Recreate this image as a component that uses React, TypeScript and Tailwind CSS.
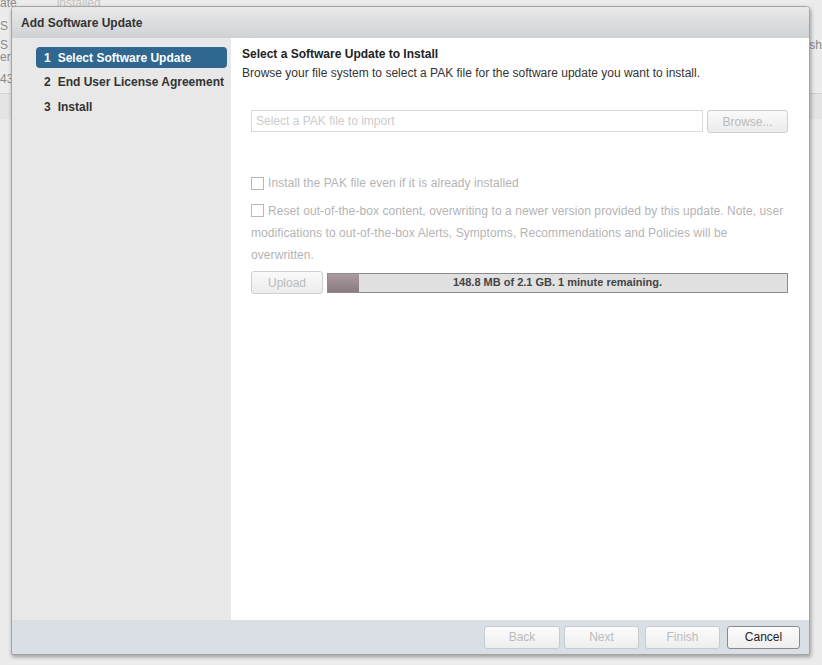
import React from 'react'

const font = { fontFamily: '"Liberation Sans", Arial, sans-serif' }

function Step({ n, label, active }: { n: number; label: string; active?: boolean }) {
  return (
    <div
      className={`flex h-[21px] items-center gap-[7px] rounded-[4px] pl-[8px] text-[12px] font-bold ${
        active ? 'bg-[#2f6791] text-white' : 'text-[#333]'
      }`}
    >
      <span>{n}</span>
      <span>{label}</span>
    </div>
  )
}

function FooterButton({ label, primary, className }: { label: string; primary?: boolean; className?: string }) {
  return (
    <button
      className={`h-[23px] rounded-[3px] border bg-gradient-to-b from-[#fcfcfc] to-[#eeeeee] text-[12px] ${
        primary ? 'border-[#8a8a8a] text-[#222]' : 'border-[#c8ccd0] text-[#bbbbbb]'
      } ${className ?? ''}`}
    >
      {label}
    </button>
  )
}

export default function App() {
  return (
    <div className="relative h-[665px] w-[822px] overflow-hidden bg-[#ececec]" style={font}>
      {/* page behind the dialog */}
      <div className="text-[12px] text-[#8a8a8a]">
        <div className="-mt-[3px] flex gap-[40px] leading-[12px]">
          <span>ate</span>
          <span className="text-[#c4c4c4]">installed</span>
        </div>
        <div className="mt-[10px] leading-[14px]">S</div>
        <div className="mt-[6px] flex justify-between leading-[12px]">
          <span>S</span>
          <span>sh</span>
        </div>
        <div className="leading-[12px]">er</div>
        <div className="mt-[10px] leading-[12px]">43</div>
        <div className="mt-[8px] h-[26px] border-t border-[#d2d2d2] bg-[#e4e4e4]" />
      </div>

      {/* dialog */}
      <div className="absolute left-[11px] top-[6px] flex h-[649px] w-[799px] flex-col overflow-hidden rounded-t-[4px] border border-[#a4a4a4] bg-white shadow-[1px_2px_4px_rgba(0,0,0,0.35)]">
        <div className="flex h-[31px] shrink-0 items-center bg-gradient-to-b from-[#e9e9e9] to-[#cfd2d5] pl-[9px] text-[12px] font-bold text-[#333]">
          Add Software Update
        </div>

        <div className="flex flex-1">
          <div className="w-[219px] shrink-0 bg-[#e8e8e8] pl-[24px] pr-[4px] pt-[9px]">
            <div className="flex flex-col gap-[3.5px]">
              <Step n={1} label="Select Software Update" active />
              <Step n={2} label="End User License Agreement" />
              <Step n={3} label="Install" />
            </div>
          </div>

          <div className="flex-1 pl-[11px] pr-[21px] pt-[9px] text-[12px]">
            <div className="font-bold leading-[14px] text-[#222]">Select a Software Update to Install</div>
            <div className="mt-[5px] leading-[14px] text-[#333]">
              Browse your file system to select a PAK file for the software update you want to install.
            </div>

            <div className="ml-[9px] mt-[30px] flex gap-[4px]">
              <div className="flex h-[22px] flex-1 items-center border border-[#d9d9d9] pl-[4px] text-[#cccccc]">
                Select a PAK file to import
              </div>
              <button className="h-[23px] w-[81px] rounded-[3px] border border-[#cfcfcf] bg-gradient-to-b from-[#fafafa] to-[#ececec] text-[#bbbbbb]">
                Browse...
              </button>
            </div>

            <div className="ml-[9px] mt-[39px] text-[#b4b4b4]">
              <label className="flex h-[22px] items-center gap-[4px] tracking-[0.08px]">
                <span className="h-[13px] w-[13px] border border-[#b8b8b8] bg-white" />
                Install the PAK file even if it is already installed
              </label>
              <div className="mt-[6px] leading-[22px] tracking-[0.08px]">
                <span className="mr-[4px] inline-block h-[13px] w-[13px] translate-y-[2px] border border-[#b8b8b8] bg-white" />
                Reset out-of-the-box content, overwriting to a newer version provided by this update. Note, user modifications to out-of-the-box Alerts, Symptoms, Recommendations and Policies will be overwritten.
              </div>

              <div className="mt-[5px] flex items-center gap-[4px]">
                <button className="h-[23px] w-[72px] rounded-[3px] border border-[#cfcfcf] bg-gradient-to-b from-[#fafafa] to-[#ececec] text-[#bbbbbb]">
                  Upload
                </button>
                <div className="relative flex h-[20px] flex-1 items-center justify-center border border-[#8c8c8c] bg-[#e1e1e1]">
                  <div className="absolute bottom-0 left-0 top-0 w-[31px] bg-gradient-to-b from-[#a99ba0] to-[#8a7b80]" />
                  <span className="relative text-[11px] font-bold text-[#444]">
                    148.8 MB of 2.1 GB. 1 minute remaining.
                  </span>
                </div>
              </div>
            </div>
          </div>
        </div>

        <div className="flex h-[34px] shrink-0 items-center justify-end bg-[#d9dfe5] pr-[9px]">
          <FooterButton label="Back" className="w-[76px]" />
          <FooterButton label="Next" className="ml-[4px] w-[75px]" />
          <FooterButton label="Finish" className="ml-[6px] w-[75px]" />
          <FooterButton label="Cancel" primary className="ml-[7px] w-[73px]" />
        </div>
      </div>
    </div>
  )
}
